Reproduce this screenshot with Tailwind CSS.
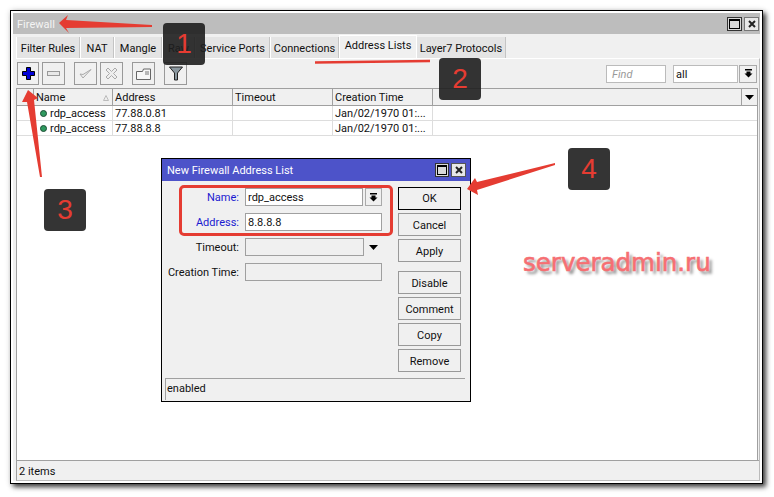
<!DOCTYPE html>
<html lang="en">
<head>
  <meta charset="UTF-8" />
  <title>Firewall</title>
  <script src="https://cdn.jsdelivr.net/npm/@tailwindcss/browser@4"></script>
</head>
<body class="relative w-[774px] h-[497px] overflow-hidden bg-white text-[11px] leading-none whitespace-nowrap text-[#111] font-['Roboto',sans-serif]">

  <!-- main window -->
  <div class="absolute left-[10px] top-[10px] w-[753px] h-[474px] flex flex-col border border-black p-[2px] bg-white shadow-[3px_3px_5px_rgba(0,0,0,0.75),0_0_6px_rgba(0,0,0,0.12)]">
    <div class="h-[21px] shrink-0 flex items-center justify-between bg-[#bdbdbd] pl-[4px] pr-[1px] text-[#f4f4f4]">
      <span class="pt-px">Firewall</span>
      <div class="flex gap-[2px]">
        <span class="w-[15px] h-[14px] flex items-center justify-center border border-[#333] bg-[#d8d8d8]"><span class="w-[11px] h-[10px] border border-black border-t-2"></span></span>
        <span class="w-[15px] h-[14px] flex items-center justify-center border border-[#777] bg-[#e8e8e8]">
          <svg width="10" height="10" viewBox="0 0 10 10"><path d="M2 2l6 6M8 2l-6 6" stroke="#222" stroke-width="2"/></svg>
        </span>
      </div>
    </div>

    <div class="flex-1 min-h-0 flex flex-col bg-[#f0f0f0]">
      <!-- tabs -->
      <div class="h-[24px] shrink-0 flex items-end pl-[3px]">
        <span class="w-[64px] h-[21px] pt-px flex items-center justify-center bg-[#e4e4e4] border-r border-[#c4c4c4] border-l border-l-white">Filter Rules</span>
        <span class="w-[34px] h-[21px] pt-px flex items-center justify-center bg-[#e4e4e4] border-r border-[#c4c4c4] border-l border-l-white">NAT</span>
        <span class="w-[48px] h-[21px] pt-px flex items-center justify-center bg-[#e4e4e4] border-r border-[#c4c4c4] border-l border-l-white">Mangle</span>
        <span class="w-[33px] h-[21px] pt-px flex items-center justify-center bg-[#e4e4e4] border-r border-[#c4c4c4] border-l border-l-white">Raw</span>
        <span class="w-[75px] h-[21px] pt-px flex items-center justify-center bg-[#e4e4e4] border-r border-[#c4c4c4] border-l border-l-white">Service Ports</span>
        <span class="w-[69px] h-[21px] pt-px flex items-center justify-center bg-[#e4e4e4] border-r border-[#c4c4c4] border-l border-l-white">Connections</span>
        <span class="w-[78px] h-[23px] pb-[3px] flex items-center justify-center bg-[#f0f0f0] border-t border-x border-white">Address Lists</span>
        <span class="w-[89px] h-[21px] pt-px flex items-center justify-center bg-[#e4e4e4] border-r border-[#c4c4c4]">Layer7 Protocols</span>
      </div>

      <!-- tab page -->
      <div class="flex-1 ml-[3px] flex flex-col min-h-0 border-t border-white border-r border-r-[#bbb]">
        <div class="h-[29px] shrink-0 flex items-center pl-[1px] pr-[2px]">
          <span class="w-[22px] h-[23px] flex items-center justify-center border border-[#999]">
            <svg width="13" height="13" viewBox="0 0 13 13"><path d="M4.500 .5h4v4h4v4h-4v4h-4v-4h-4v-4h4z" fill="#0000d8" stroke="#000" stroke-width="1"/></svg>
          </span>
          <span class="ml-[3px] w-[23px] h-[23px] flex items-center justify-center border border-[#999]">
            <svg width="13" height="7" viewBox="0 0 13 7"><rect x="0.500" y="1.500" width="12" height="4" fill="#e8e8e8" stroke="#999"/></svg>
          </span>
          <span class="ml-[9px] w-[23px] h-[23px] flex items-center justify-center border border-[#999]">
            <svg width="13" height="13" viewBox="0 0 13 13"><path d="M1 7l3 4 8-8.500-8 5z" fill="#eee" stroke="#aaa"/></svg>
          </span>
          <span class="ml-[3px] w-[23px] h-[23px] flex items-center justify-center border border-[#999]">
            <svg width="13" height="13" viewBox="0 0 13 13"><path d="M3 1l3.500 3.500 3.500-3.500 2 2-3.500 3.500 3.500 3.500-2 2-3.500-3.500-3.500 3.500-2-2 3.500-3.500-3.500-3.500z" fill="#eee" stroke="#aaa"/></svg>
          </span>
          <span class="ml-[9px] w-[23px] h-[23px] flex items-center justify-center border border-[#999]">
            <svg width="15" height="12" viewBox="0 0 15 12"><path d="M.5 3.500h6l1-2.500h7v10.500h-14z" fill="#f6f6f6" stroke="#666"/><path d="M9 4h4M9 6h4" stroke="#777"/></svg>
          </span>
          <span class="ml-[9px] w-[23px] h-[23px] flex items-center justify-center border border-[#999]">
            <svg width="14" height="15" viewBox="0 0 14 15"><path d="M.5 1h13l-5 6v7h-3v-7z" fill="#8a979f" stroke="#222"/></svg>
          </span>
          <span class="ml-auto w-[60px] h-[18px] pt-px flex items-center pl-[5px] border border-[#bbb] bg-white italic text-[#999]">Find</span>
          <span class="ml-[7px] w-[65px] h-[18px] pt-px flex items-center pl-[2px] border border-[#bbb] bg-white">all</span>
          <span class="ml-[1px] w-[18px] h-[18px] flex items-center justify-center border border-[#aaa]">
            <svg width="9" height="9" viewBox="0 0 9 9"><path d="M1 0h7v1.500h-7zM2.500 2.500h4v2h2l-4 4-4-4h2z" fill="#000"/></svg>
          </span>
        </div>

        <!-- table -->
        <div class="flex-1 min-h-0 flex flex-col mr-[1px] border-t border-l border-r border-[#a0a0a0] bg-white">
          <div class="h-[17px] shrink-0 flex bg-[#f0f0f0] border-b border-[#a0a0a0]">
            <span class="w-[17px] border-r border-[#a0a0a0]"></span>
            <span class="w-[79px] pt-px flex items-center justify-between pl-[2px] pr-[3px] border-r border-[#a0a0a0]">Name
              <svg width="6" height="6" viewBox="0 0 6 6"><path d="M3 .5L5.500 5.500H.5z" fill="#eee" stroke="#bbb"/></svg>
            </span>
            <span class="w-[120px] pt-px flex items-center pl-[2px] border-r border-[#a0a0a0]">Address</span>
            <span class="w-[100px] pt-px flex items-center pl-[2px] border-r border-[#a0a0a0]">Timeout</span>
            <span class="w-[100px] pt-px flex items-center pl-[2px] border-r border-[#a0a0a0]">Creation Time</span>
            <span class="flex-1 border-r border-[#a0a0a0]"></span>
            <span class="w-[15px] flex items-center justify-center">
              <svg width="9" height="5" viewBox="0 0 9 5"><path d="M0 0h9l-4.500 5z" fill="#000"/></svg>
            </span>
          </div>
          <div class="h-[15px] shrink-0 flex border-b border-[#ddd]">
            <span class="w-[17px]"></span>
            <span class="w-[79px] flex items-center gap-[3px] pl-[6px] border-r border-[#ddd]"><i class="w-[7px] h-[7px] rounded-full bg-[#2f9a5f] border border-[#1a4d33]"></i>rdp_access</span>
            <span class="w-[120px] flex items-center pl-[2px] border-r border-[#ddd]">77.88.0.81</span>
            <span class="w-[100px] border-r border-[#ddd]"></span>
            <span class="w-[100px] flex items-center pl-[2px] border-r border-[#ddd]">Jan/02/1970 01:...</span>
          </div>
          <div class="h-[15px] shrink-0 flex border-b border-[#ddd]">
            <span class="w-[17px]"></span>
            <span class="w-[79px] flex items-center gap-[3px] pl-[6px] border-r border-[#ddd]"><i class="w-[7px] h-[7px] rounded-full bg-[#2f9a5f] border border-[#1a4d33]"></i>rdp_access</span>
            <span class="w-[120px] flex items-center pl-[2px] border-r border-[#ddd]">77.88.8.8</span>
            <span class="w-[100px] border-r border-[#ddd]"></span>
            <span class="w-[100px] flex items-center pl-[2px] border-r border-[#ddd]">Jan/02/1970 01:...</span>
          </div>
        </div>

        <div class="h-[21px] shrink-0 pt-px flex items-center pl-[2px] border-t border-[#a0a0a0] border-l border-l-[#a0a0a0] border-b border-b-[#bbb]">2 items</div>
      </div>
    </div>
  </div>

  <!-- dialog -->
  <div class="absolute left-[161px] top-[158px] w-[310px] h-[244px] flex flex-col border border-black bg-[#f0f0f0]">
    <div class="h-[22px] shrink-0 flex items-center justify-between bg-[#4d53c9] pl-[5px] pr-[4px] text-white">
      <span class="pt-px">New Firewall Address List</span>
      <div class="flex gap-[2px]">
        <span class="w-[14px] h-[14px] flex items-center justify-center border border-[#333] bg-[#d8d8d8]"><span class="w-[10px] h-[10px] border border-black border-t-2"></span></span>
        <span class="w-[15px] h-[14px] flex items-center justify-center border border-[#555] bg-[#e8e8e8]">
          <svg width="10" height="10" viewBox="0 0 10 10"><path d="M2 2l6 6M8 2l-6 6" stroke="#222" stroke-width="2"/></svg>
        </span>
      </div>
    </div>
    <div class="flex-1 min-h-0 flex pt-[7px]">
      <div class="w-[236px] flex flex-col gap-[7px]">
        <div class="h-[18px] flex items-center">
          <span class="w-[77px] pt-px text-right text-[#1a1ad0]">Name:</span>
          <span class="ml-[6px] w-[118px] h-[18px] pt-px flex items-center pl-[2px] border border-[#a0a0a0] bg-white">rdp_access</span>
          <span class="ml-[2px] w-[17px] h-[18px] flex items-center justify-center border border-[#aaa]">
            <svg width="9" height="9" viewBox="0 0 9 9"><path d="M1 0h7v1.500h-7zM2.500 2.500h4v2h2l-4 4-4-4h2z" fill="#000"/></svg>
          </span>
        </div>
        <div class="h-[18px] flex items-center">
          <span class="w-[77px] pt-px text-right text-[#1a1ad0]">Address:</span>
          <span class="ml-[6px] w-[137px] h-[18px] pt-px flex items-center pl-[2px] border border-[#a0a0a0] bg-white">8.8.8.8</span>
        </div>
        <div class="h-[18px] flex items-center">
          <span class="w-[77px] pt-px text-right">Timeout:</span>
          <span class="ml-[6px] w-[119px] h-[18px] border border-[#a0a0a0]"></span>
          <svg class="ml-[5px]" width="9" height="5" viewBox="0 0 9 5"><path d="M0 0h9l-4.500 5z" fill="#000"/></svg>
        </div>
        <div class="h-[18px] flex items-center">
          <span class="w-[77px] pt-px text-right">Creation Time:</span>
          <span class="ml-[6px] w-[137px] h-[18px] border border-[#a0a0a0]"></span>
        </div>
      </div>
      <div class="w-[63px] -mt-[1px] flex flex-col">
        <span class="h-[23px] flex items-center justify-center border border-black">OK</span>
        <span class="h-[23px] mt-[3px] pt-px flex items-center justify-center border border-[#999]">Cancel</span>
        <span class="h-[23px] mt-[3px] pt-px flex items-center justify-center border border-[#999]">Apply</span>
        <span class="h-[23px] mt-[9px] pt-px flex items-center justify-center border border-[#999]">Disable</span>
        <span class="h-[23px] mt-[3px] pt-px flex items-center justify-center border border-[#999]">Comment</span>
        <span class="h-[23px] mt-[3px] pt-px flex items-center justify-center border border-[#999]">Copy</span>
        <span class="h-[23px] mt-[3px] pt-px flex items-center justify-center border border-[#999]">Remove</span>
      </div>
    </div>
    <div class="h-[22px] shrink-0 ml-[3px] mr-[5px] mb-[1px] flex items-center pl-[1px] pb-[2px] border-t border-l border-[#a0a0a0]">enabled</div>
  </div>

  <!-- screenshot annotations -->
  <div class="absolute left-[179px] top-[185px] w-[214px] h-[51px] rounded-[5px] border-[3px] border-[#e53c32]"></div>

  <div class="absolute left-[163px] top-[23px] w-[42px] h-[42px] flex items-center justify-center rounded-[4px] bg-[#1e1e1e]/90 text-[#e53c32] text-[28px] font-['Liberation_Sans',sans-serif]">1</div>
  <div class="absolute left-[439px] top-[58px] w-[42px] h-[42px] flex items-center justify-center rounded-[4px] bg-[#1e1e1e]/90 text-[#e53c32] text-[28px] font-['Liberation_Sans',sans-serif]">2</div>
  <div class="absolute left-[44px] top-[189px] w-[42px] h-[42px] flex items-center justify-center rounded-[4px] bg-[#1e1e1e]/90 text-[#e53c32] text-[28px] font-['Liberation_Sans',sans-serif]">3</div>
  <div class="absolute left-[568px] top-[148px] w-[42px] h-[42px] flex items-center justify-center rounded-[4px] bg-[#1e1e1e]/90 text-[#e53c32] text-[28px] font-['Liberation_Sans',sans-serif]">4</div>

  <svg class="absolute left-0 top-0" width="774" height="497" viewBox="0 0 774 497">
    <path d="M59 23L68 15L66 20L152 25L152 27L66 28L69 33z" fill="#e53c32"/>
    <path d="M315 62.500Q370 62 430 61" fill="none" stroke="#e53c32" stroke-width="2.500"/>
    <path d="M28 90L38 98L34 100L42 177L40 177L27 102L22 102z" fill="#e53c32"/>
    <path d="M467 189L475 178L477 182L555 163L555 165L477 190L478 195z" fill="#e53c32"/>
  </svg>

  <div class="absolute left-[523px] top-[247px] text-[24.500px] leading-[32px] text-[#f66f73] font-['DejaVu_Sans',sans-serif] [-webkit-text-stroke:0.6px_#f66f73] [text-shadow:3px_3px_3px_rgba(0,0,0,0.45)]">serveradmin.ru</div>
</body>
</html>
